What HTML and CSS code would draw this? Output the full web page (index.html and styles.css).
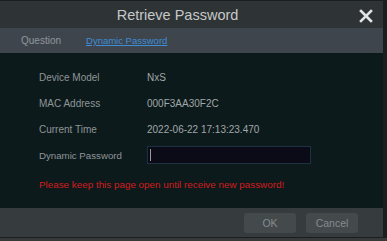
FILE: index.html
```html
<!DOCTYPE html>
<html lang="en">

<head>
    <meta charset="UTF-8">
    <meta name="viewport" content="width=device-width, initial-scale=1.0">
    <title>Retrieve Password</title>
    <link rel="stylesheet" href="styles.css">
</head>

<body>
    <div class="backdrop">
        <div class="dialog">
            <header class="title-bar">
                <h1 class="title">Retrieve Password</h1>
                <button class="close" aria-label="Close">
                    <svg width="14" height="14" viewBox="0 0 14 14">
                        <path d="M2 2 L12 12 M12 2 L2 12" stroke="#e2e4e4" stroke-width="2.6" stroke-linecap="square" fill="none" />
                    </svg>
                </button>
            </header>
            <nav class="tabs">
                <span class="tab">Question</span>
                <span class="tab active">Dynamic Password</span>
            </nav>
            <main class="content">
                <div class="row">
                    <span class="label">Device Model</span>
                    <span class="value">NxS</span>
                </div>
                <div class="row">
                    <span class="label">MAC Address</span>
                    <span class="value">000F3AA30F2C</span>
                </div>
                <div class="row">
                    <span class="label">Current Time</span>
                    <span class="value">2022-06-22 17:13:23.470</span>
                </div>
                <div class="row">
                    <span class="label">Dynamic Password</span>
                    <span class="input"><span class="caret"></span></span>
                </div>
                <p class="warning">Please keep this page open until receive new password!</p>
            </main>
            <footer class="footer">
                <button class="btn">OK</button>
                <button class="btn">Cancel</button>
            </footer>
        </div>
    </div>
</body>

</html>
```

FILE: styles.css
```css
* {
    box-sizing: border-box;
}

body {
    margin: 0;
    background-color: #1b1e1f;
    font-family: "Liberation Sans", Arial, sans-serif;
    font-size: 10px;
}

.backdrop {
    height: 241px;
    padding-top: 1px;
    overflow: hidden;
    background: linear-gradient(#1b1e1f, #1b1e1f) 0 0 / 100% 238px no-repeat, #38393a;
}

.dialog {
    width: 383px;
    background-color: #0d1a1c;
}

.title-bar {
    height: 27px;
    display: flex;
    align-items: center;
    justify-content: center;
    position: relative;
    background-color: #2e3335;
}

.title {
    margin: 0 28px 0 0;
    font-size: 14.5px;
    font-weight: normal;
    color: #c6c8c8;
}

.close {
    position: absolute;
    right: 10px;
    top: 8px;
    padding: 0;
    border: none;
    background: none;
    width: 14px;
    height: 14px;
}

.close svg {
    display: block;
}

.tabs {
    height: 25px;
    display: flex;
    align-items: center;
    gap: 25px;
    padding-left: 21px;
    background-color: #3f454c;
}

.tab {
    color: #8f979e;
    font-size: 10px;
}

.tab.active {
    color: #3d8ed6;
    text-decoration: underline;
    font-size: 9.5px;
}

.content {
    height: 155px;
    padding: 11px 0 0 39px;
}

.row {
    height: 26px;
    display: flex;
    align-items: center;
}

.label {
    width: 108px;
    color: #8d9597;
}

.row:last-of-type .label {
    font-size: 9.7px;
}

.value {
    color: #a0a7a8;
}

.input {
    width: 164px;
    height: 18px;
    margin-top: -1px;
    padding: 2px 2px;
    border: 1px solid #1d3142;
    background-color: #0b0a17;
}

.caret {
    display: block;
    width: 1px;
    height: 12px;
    background-color: #9a9a9a;
}

.warning {
    margin: 4px 0 0;
    line-height: 26px;
    color: #d11c1c;
    font-size: 9.85px;
}

.footer {
    height: 29px;
    display: flex;
    justify-content: flex-end;
    align-items: center;
    gap: 10px;
    padding-right: 25px;
    background-color: #363b3e;
}

.btn {
    width: 52px;
    height: 20px;
    border: none;
    border-radius: 3px;
    background-color: #44494c;
    color: #868c8f;
    font-family: "Liberation Sans", Arial, sans-serif;
    font-size: 10.5px;
}
```
